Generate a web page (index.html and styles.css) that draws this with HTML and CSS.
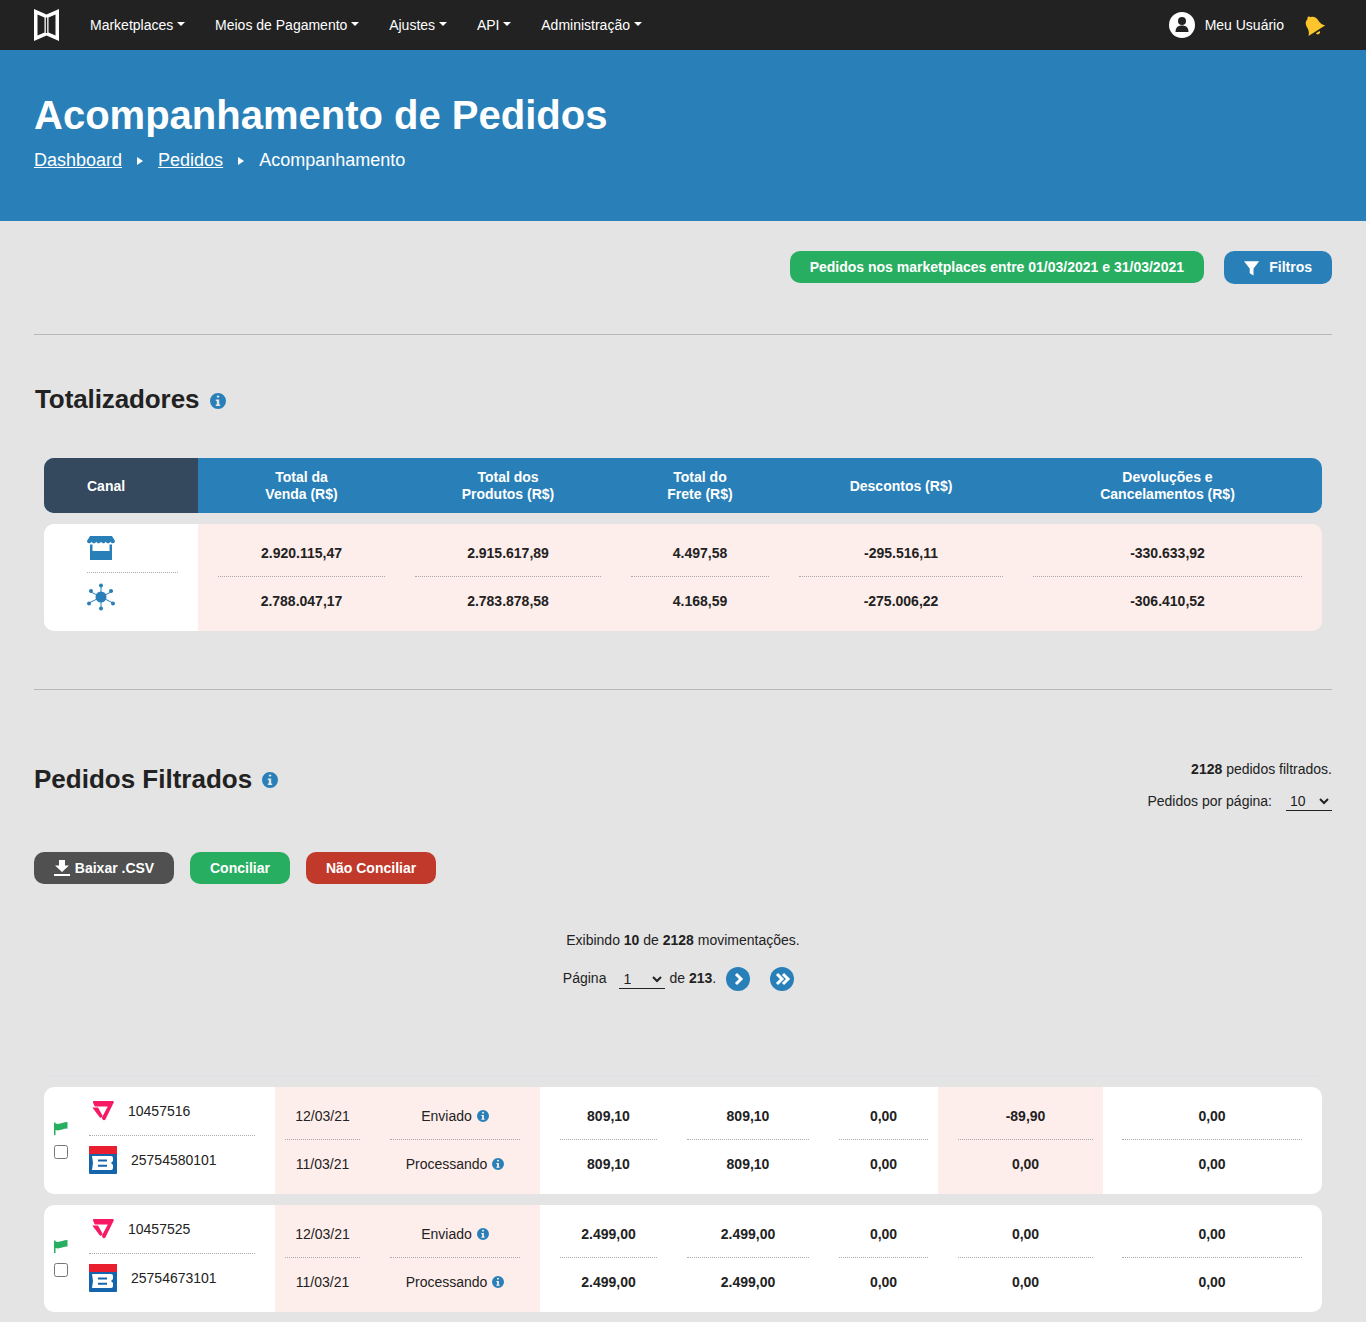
FILE: index.html
```html
<!DOCTYPE html>
<html lang="pt-BR">
<head>
<meta charset="utf-8">
<title>Acompanhamento de Pedidos</title>
<link rel="stylesheet" href="styles.css">
</head>
<body>
<svg class="defs" width="0" height="0" aria-hidden="true">
  <symbol id="info" viewBox="0 0 16 16"><path fill-rule="evenodd" d="M8 0a8 8 0 1 1 0 16A8 8 0 0 1 8 0zM6.600 3.600a1.500 1.500 0 0 0 2.900 0 1.500 1.500 0 0 0-2.900 0zM5.800 6.600v1.500h1v3.400h-1V13h4.400v-1.500h-1V6.600z"/></symbol>
  <symbol id="vtex" viewBox="0 0 22 20"><path d="M2 0H20.500Q22.300 0 21.600 1.800L13.500 18.200Q12 20.300 10.500 18.200L9.800 16.800L15.800 5.500H3.200Q2.600 5.500 2.400 4.800L1 1.500Q.6 0 2 0zM.3 6.500H6L10.600 14.800 9.500 16.200Q8.200 17.500 7.300 15.800z"/></symbol>
  <symbol id="bling" viewBox="0 0 28 28"><rect width="28" height="28" rx="1" fill="#1565ad"/><path d="M0 1a1 1 0 0 1 1-1h26a1 1 0 0 1 1 1v7H0z" fill="#e91e2e"/><path fill="#fff" fill-rule="evenodd" d="M3 10H22a2 2 0 0 1 2 2v3l-2 2 2 2v3a2 2 0 0 1-2 2H3l1-7zM9 13.500v2h9v-2zM9 18.800v2h9v-2z"/></symbol>
  <symbol id="flag" viewBox="0 0 14 14"><path d="M0 1.500h1.500V14H0zM1.500 2.500c4 1.500 7-1.500 12-1.500v6.500c-5 0-8 3-12 1.500z"/></symbol>
</svg>

<nav class="topbar">
  <div class="topbar-left">
    <svg class="brand" viewBox="0 0 25 32"><path fill="#fff" fill-rule="evenodd" d="M0 0l12.500 5.500L25 0v32l-12.500-5.500L0 32zM3.500 5.500V26.500L10.500 23.500V8.500zM21.500 5.500L14.500 8.500V23.500L21.500 26.500zM11.800 8.500V24H13.200V8.500z"/></svg>
    <a class="nav-item">Marketplaces</a>
    <a class="nav-item">Meios de Pagamento</a>
    <a class="nav-item">Ajustes</a>
    <a class="nav-item">API</a>
    <a class="nav-item">Administração</a>
  </div>
  <div class="topbar-right">
    <svg class="avatar" viewBox="0 0 26 26"><circle cx="13" cy="13" r="13" fill="#fff"/><circle cx="13" cy="9" r="4" fill="#222"/><path d="M6.500 20c0-4.500 2.500-6.500 6.500-6.500s6.500 2 6.500 6.500z" fill="#222"/></svg>
    <span class="user-name">Meu Usuário</span>
    <svg class="bell" viewBox="0 0 20 20"><path transform="rotate(-32 10 10)" fill="#fdc52c" d="M10 0c1 0 1.500.7 1.500 1.500C14.500 2.200 16 4.500 16 7.500c0 3.500 1 5.500 3 7.500H1c2-2 3-4 3-7.500 0-3 1.500-5.300 4.500-6C8.500.7 9 0 10 0zM8 16.500h4a2 2 0 0 1-4 0z"/></svg>
  </div>
</nav>

<header class="hero">
  <h1>Acompanhamento de Pedidos</h1>
  <div class="crumbs">
    <a>Dashboard</a><span class="crumb-sep"></span><a>Pedidos</a><span class="crumb-sep"></span><span>Acompanhamento</span>
  </div>
</header>

<main class="page">
  <div class="toolbar">
    <span class="btn btn-green period">Pedidos nos marketplaces entre 01/03/2021 e 31/03/2021</span>
    <button class="btn btn-blue filter">
      <svg class="funnel" viewBox="0 0 16 16"><path fill="#fff" d="M0 1h16L10 8.500V16L6 13.500V8.500z"/></svg>
      Filtros
    </button>
  </div>
  <hr class="rule">

  <h2 class="section-title totals-title">Totalizadores <svg class="ico-info ico-title"><use href="#info"/></svg></h2>

  <div class="totals-head">
    <div class="canal-head single">Canal</div>
    <div>Total da<br>Venda (R$)</div>
    <div>Total dos<br>Produtos (R$)</div>
    <div>Total do<br>Frete (R$)</div>
    <div class="single">Descontos (R$)</div>
    <div>Devoluções e<br>Cancelamentos (R$)</div>
  </div>

  <div class="totals-body">
    <div class="canal-cell">
      <div class="canal-top">
        <svg class="store" viewBox="0 0 28 24"><path d="M3 0h22l3 5c0 1.500-1 2.200-2.300 2.200-1 0-1.900-.6-2.300-1.500-.4.9-1.300 1.500-2.300 1.500s-1.800-.6-2.300-1.500c-.4.9-1.300 1.500-2.300 1.500s-1.900-.6-2.500-1.500c-.5.9-1.400 1.500-2.400 1.500s-1.800-.6-2.300-1.500c-.4.9-1.300 1.500-2.300 1.500S5 6.600 4.600 5.700C4.200 6.600 3.300 7.200 2.300 7.200 1 7.200 0 6.500 0 5zM3 8.500h2.500V15h17V8.500H25V24H3z"/></svg>
      </div>
      <div class="canal-bottom">
        <svg class="network" viewBox="0 0 28 28"><g stroke="#2980b9" stroke-width="1"><path d="M14 2v24M2 8l24 12M26 8L2 20"/></g><circle cx="14" cy="14" r="5.500"/><circle cx="14" cy="2.500" r="2"/><circle cx="14" cy="25.500" r="2"/><circle cx="4" cy="8" r="2"/><circle cx="24" cy="8" r="2"/><circle cx="2" cy="20.500" r="2"/><circle cx="26" cy="20.500" r="2"/></svg>
      </div>
    </div>
    <div class="t-col p20"><div class="c-top">2.920.115,47</div><div class="c-bot">2.788.047,17</div></div>
    <div class="t-col p10"><div class="c-top">2.915.617,89</div><div class="c-bot">2.783.878,58</div></div>
    <div class="t-col p20"><div class="c-top">4.497,58</div><div class="c-bot">4.168,59</div></div>
    <div class="t-col p10"><div class="c-top">-295.516,11</div><div class="c-bot">-275.006,22</div></div>
    <div class="t-col p20"><div class="c-top">-330.633,92</div><div class="c-bot">-306.410,52</div></div>
  </div>

  <hr class="rule rule-2">

  <div class="orders-head">
    <h2 class="section-title">Pedidos Filtrados <svg class="ico-info ico-title2"><use href="#info"/></svg></h2>
    <div class="orders-meta">
      <div><b>2128</b> pedidos filtrados.</div>
      <label class="per-page">Pedidos por página: <select class="line-select per-select"><option>10</option></select></label>
    </div>
  </div>

  <div class="actions">
    <button class="btn btn-dark csv">
      <svg class="download" viewBox="0 0 16 16"><path fill="#fff" d="M5 0h6v5.500h4L8 12 1 5.500h4zM0 14h16v2H0z"/></svg>
      Baixar .CSV
    </button>
    <button class="btn btn-green">Conciliar</button>
    <button class="btn btn-red">Não Conciliar</button>
  </div>

  <div class="paging">
    <div>Exibindo <b>10</b> de <b>2128</b> movimentações.</div>
    <div class="paging-row">
      <span class="page-word">Página</span>
      <select class="line-select page-select"><option>1</option></select>
      <span class="de">de <b>213</b>.</span>
      <svg class="pg-btn" viewBox="0 0 24 24"><circle cx="12" cy="12" r="12"/><path d="M10 7l5 5-5 5" fill="none" stroke="#fff" stroke-width="3"/></svg>
      <svg class="pg-btn" viewBox="0 0 24 24"><circle cx="12" cy="12" r="12"/><path d="M7 7l5 5-5 5M13 7l5 5-5 5" fill="none" stroke="#fff" stroke-width="3"/></svg>
    </div>
  </div>

  <div class="list-line"></div>

  <article class="order">
    <div class="o-id">
      <div class="o-check">
        <svg class="flag"><use href="#flag"/></svg>
        <input type="checkbox" class="check">
      </div>
      <div class="o-ids">
        <div class="o-mk"><svg class="vtex"><use href="#vtex"/></svg><span>10457516</span></div>
        <div class="o-bl"><svg class="bling"><use href="#bling"/></svg><span>25754580101</span></div>
      </div>
    </div>
    <div class="c c-date pink"><div class="c-top">12/03/21</div><div class="c-bot">11/03/21</div></div>
    <div class="c c-status pink"><div class="c-top">Enviado <svg class="ico-info ico-s"><use href="#info"/></svg></div><div class="c-bot">Processando <svg class="ico-info ico-s"><use href="#info"/></svg></div></div>
    <div class="c c-a"><div class="c-top">809,10</div><div class="c-bot">809,10</div></div>
    <div class="c c-b"><div class="c-top">809,10</div><div class="c-bot">809,10</div></div>
    <div class="c c-c"><div class="c-top">0,00</div><div class="c-bot">0,00</div></div>
    <div class="c c-d pink"><div class="c-top">-89,90</div><div class="c-bot">0,00</div></div>
    <div class="c c-e"><div class="c-top">0,00</div><div class="c-bot">0,00</div></div>
  </article>

  <article class="order">
    <div class="o-id">
      <div class="o-check">
        <svg class="flag"><use href="#flag"/></svg>
        <input type="checkbox" class="check">
      </div>
      <div class="o-ids">
        <div class="o-mk"><svg class="vtex"><use href="#vtex"/></svg><span>10457525</span></div>
        <div class="o-bl"><svg class="bling"><use href="#bling"/></svg><span>25754673101</span></div>
      </div>
    </div>
    <div class="c c-date pink"><div class="c-top">12/03/21</div><div class="c-bot">11/03/21</div></div>
    <div class="c c-status pink"><div class="c-top">Enviado <svg class="ico-info ico-s"><use href="#info"/></svg></div><div class="c-bot">Processando <svg class="ico-info ico-s"><use href="#info"/></svg></div></div>
    <div class="c c-a"><div class="c-top">2.499,00</div><div class="c-bot">2.499,00</div></div>
    <div class="c c-b"><div class="c-top">2.499,00</div><div class="c-bot">2.499,00</div></div>
    <div class="c c-c"><div class="c-top">0,00</div><div class="c-bot">0,00</div></div>
    <div class="c c-d"><div class="c-top">0,00</div><div class="c-bot">0,00</div></div>
    <div class="c c-e"><div class="c-top">0,00</div><div class="c-bot">0,00</div></div>
  </article>
</main>
</body>
</html>
```
FILE: styles.css
```css
* { box-sizing: border-box; }
html, body { margin: 0; padding: 0; }
body {
  background: #e4e4e4;
  color: #222;
  font-family: "Liberation Sans", Arial, sans-serif;
  font-size: 14px;
  line-height: 17px;
  height: 1322px;
  overflow: hidden;
}
.defs { position: absolute; }

.topbar {
  height: 50px;
  background: #222;
  display: flex;
  align-items: center;
  justify-content: space-between;
  padding: 0 42px 0 34px;
  color: #fff;
}
.topbar-left, .topbar-right { display: flex; align-items: center; }
.brand { width: 25px; height: 32px; margin-right: 31px; }
.nav-item { margin-right: 30px; display: flex; align-items: center; }
.nav-item::after {
  content: "";
  margin-left: 3.800px;
  margin-top: -2px;
  border-top: 4px solid #fff;
  border-left: 4px solid transparent;
  border-right: 4px solid transparent;
}
.avatar { width: 26px; height: 26px; margin-right: 10px; }
.user-name { margin-right: 19px; }
.bell { width: 22px; height: 22px; margin-right: -1px; margin-top: 1px; }

.hero {
  height: 171px;
  background: #2980b9;
  color: #fff;
  padding: 41px 34px 0;
}
.hero h1 { margin: 0; font-size: 40px; line-height: 48px; font-weight: 700; }
.crumbs { display: flex; align-items: center; font-size: 18px; line-height: 22px; margin-top: 10px; }
.crumbs a { text-decoration: underline; }
.crumb-sep {
  margin: 2px 15px 0;
  border-left: 6px solid #fff;
  border-top: 4px solid transparent;
  border-bottom: 4px solid transparent;
}

.page { padding: 30px 34px 0; }
.toolbar { display: flex; justify-content: flex-end; align-items: flex-start; gap: 20px; }
.btn {
  border: 0;
  border-radius: 10px;
  height: 32px;
  padding: 0 20px;
  color: #fff;
  font: 700 14px/17px "Liberation Sans", Arial, sans-serif;
  display: inline-flex;
  align-items: center;
  justify-content: center;
}
.btn-green { background: #27ae60; }
.btn-blue { background: #2980b9; }
.btn-dark { background: #505050; }
.btn-red { background: #c0392b; }
.filter { height: 33px; width: 108px; }
.funnel { width: 16px; height: 16px; margin-right: 10px; }

.rule { border: 0; border-top: 1px solid #b8b8b8; margin: 50px 0 0; }
.rule-2 { margin-top: 58px; }

.section-title { margin: 0; font-size: 26px; line-height: 32px; font-weight: 700; display: flex; align-items: center; }
.totals-title { margin: 48px 0 0 1px; letter-spacing: -.1px; }
.ico-info { fill: #2980b9; display: inline-block; }
.ico-title { width: 16px; height: 16px; margin-left: 11px; margin-top: 3px; }
.ico-title2 { width: 16px; height: 16px; margin-left: 10px; margin-top: 2px; }
.ico-s { width: 12px; height: 12px; vertical-align: -1px; margin-left: 1px; }

.totals-head, .totals-body {
  margin: 0 10px;
  display: grid;
  grid-template-columns: 154px 207px 206px 178px 224px 309px;
}
.totals-head {
  margin-top: 43px;
  height: 55px;
  background: #2980b9;
  border-radius: 10px;
  color: #fff;
  font-weight: 700;
  text-align: center;
  overflow: hidden;
}
.totals-head > div { display: flex; align-items: center; justify-content: center; }
.totals-head > .single { padding-top: 1px; }
.totals-head > .canal-head { background: #34495e; justify-content: flex-start; padding-left: 43px; }
.totals-body {
  margin-top: 11px;
  height: 107px;
  background: #feeeeb;
  border-radius: 10px;
  overflow: hidden;
  font-weight: 700;
  text-align: center;
}
.canal-cell { background: #fff; padding: 12px 20px 0 43px; }
.canal-top { height: 37px; border-bottom: 1px dotted #aaa; }
.canal-bottom { padding-top: 10px; }
.store { display: block; width: 28px; height: 24px; fill: #2980b9; }
.network { display: block; width: 28px; height: 28px; fill: #2980b9; }
.p20 { padding: 0 20px; }
.p10 { padding: 0 10px; }

.orders-head { display: flex; justify-content: space-between; align-items: flex-start; margin-top: 71px; height: 91px; }
.orders-head .section-title { margin-top: 2px; }
.per-page { display: flex; justify-content: flex-end; align-items: center; margin-top: 13px; gap: 14px; }
.orders-meta { text-align: right; }
.line-select {
  border: 0;
  border-bottom: 1px solid #222;
  border-radius: 0;
  background: transparent;
  color: #222;
  font: 14px "Liberation Sans", Arial, sans-serif;
  height: 20px;
  padding: 0;
}
.per-select { width: 46px; }
.page-select { width: 46px; margin: 0 4px 0 13px; }

.actions { display: flex; gap: 16px; }
.csv { width: 140px; padding: 0; }
.download { width: 16px; height: 16px; margin-right: 5px; }

.paging { margin-top: 48px; text-align: center; }
.paging-row { display: flex; justify-content: center; align-items: center; margin-top: 18px; height: 24px; padding-right: 9px; }
.page-word, .de { margin-top: -2px; }
.de { margin-right: 10px; }
.pg-btn { width: 24px; height: 24px; fill: #2980b9; margin-right: 20px; }
.pg-btn:last-child { margin-right: 0; }

.list-line { height: 2px; margin: 84px 10px 0; background: #e2e2e6; }

.order {
  margin: 10px 10px 0;
  height: 107px;
  background: #fff;
  border-radius: 10px;
  overflow: hidden;
  display: grid;
  grid-template-columns: 231px 95px 170px 137px 152px 109px 165px 219px;
  text-align: center;
}
.order + .order { margin-top: 11px; }
.pink { background: #feeeeb; }
.c-top { height: 53px; padding-top: 21px; border-bottom: 1px dotted #aaa; }
.c-bot { padding-top: 16px; }
.c-date { padding: 0 10px; }
.c-status { padding: 0 20px; }
.c-a { padding: 0 20px; font-weight: 700; }
.c-b { padding: 0 20px 0 10px; font-weight: 700; }
.c-c { padding: 0 10px 0 10px; font-weight: 700; }
.c-d { padding: 0 10px 0 20px; font-weight: 700; }
.c-e { padding: 0 20px 0 19px; font-weight: 700; }

.o-id { display: flex; padding: 0 20px 0 10px; text-align: left; }
.o-check { width: 35px; padding-top: 34px; }
.flag { display: block; width: 14px; height: 14px; fill: #27ae60; }
.check { display: block; width: 14px; height: 14px; margin: 10px 0 0; }
.o-ids { flex: 1; }
.o-mk { height: 49px; border-bottom: 1px dotted #aaa; display: flex; align-items: flex-start; padding: 14px 0 0 3px; }
.vtex { width: 22px; height: 20px; fill: #f71963; margin-right: 14px; }
.o-bl { display: flex; padding-top: 10px; align-items: flex-start; }
.bling { width: 28px; height: 28px; margin-right: 14px; }
.o-bl span { margin-top: 6px; }
.o-mk span { margin-top: 2px; }
```
